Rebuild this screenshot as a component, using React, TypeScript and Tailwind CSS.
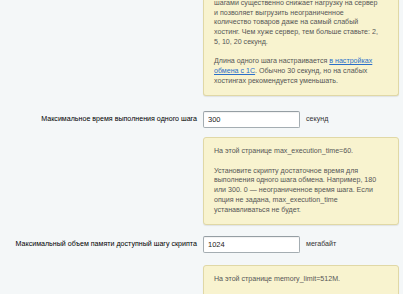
const font = { fontFamily: '"Liberation Sans", Arial, sans-serif' };

function Note({ children, className = "" }: { children: React.ReactNode; className?: string }) {
  return (
    <div
      className={
        "ml-[203px] w-[196px] rounded-[3px] border border-[#e0d8a6] bg-[#f8f3cf] pl-[10px] pr-[14px] text-[7.1px] leading-[9.7px] text-[#565656] shadow-[0_1px_1px_rgba(0,0,0,0.08)] " +
        className
      }
    >
      {children}
    </div>
  );
}

function Row({ label, value, unit }: { label: string; value: string; unit: string }) {
  return (
    <div className="flex items-center">
      <div className="w-[203px] shrink-0 pr-[6px] text-right text-[7.1px] text-black whitespace-nowrap">{label}</div>
      <input
        readOnly
        value={value}
        className="h-[17px] w-[97px] rounded-[2px] border border-[#a4adb2] border-t-[#959ea3] bg-white px-[4px] text-[7.5px] text-[#222] shadow-[inset_0_1px_1px_rgba(0,0,0,0.06)] outline-none"
        style={font}
      />
      <div className="pl-[6px] text-[7.1px] text-[#333]">{unit}</div>
    </div>
  );
}

export default function App() {
  return (
    <div className="h-[294px] w-[403px] overflow-hidden bg-[#f4f7f8]" style={font}>
      <Note className="-mt-px rounded-t-none border-t-0 pb-[9px] whitespace-nowrap">
        шагами существенно снижает нагрузку на сервер
        <br />
        и позволяет выгрузить неограниченное
        <br />
        количество товаров даже на самый слабый
        <br />
        хостинг. Чем хуже сервер, тем больше ставьте: 2,
        <br />
        5, 10, 20 секунд.
        <div className="h-[9.7px]" />
        Длина одного шага настраивается{" "}
        <a className="text-[#2a6fc9] underline">в настройках</a>
        <br />
        <a className="text-[#2a6fc9] underline">обмена с 1С</a>. Обычно 30 секунд, но на слабых
        <br />
        хостингах рекомендуется уменьшать.
      </Note>

      <div className="mt-[15px] mb-[9px]">
        <Row label="Максимальное время выполнения одного шага" value="300" unit="секунд" />
      </div>

      <Note className="py-[9px] whitespace-nowrap">
        На этой странице max_execution_time=60.
        <div className="h-[9.7px]" />
        Установите скрипту достаточное время для
        <br />
        выполнения одного шага обмена. Например, 180
        <br />
        или 300. 0 — неограниченное время шага. Если
        <br />
        опция не задана, max_execution_time
        <br />
        устанавливаться не будет.
      </Note>

      <div className="mt-[11px] mb-[12px]">
        <Row label="Максимальный объем памяти доступный шагу скрипта" value="1024" unit="мегабайт" />
      </div>

      <Note className="pt-[9px] pb-[20px] whitespace-nowrap">На этой странице memory_limit=512M.</Note>
    </div>
  );
}
